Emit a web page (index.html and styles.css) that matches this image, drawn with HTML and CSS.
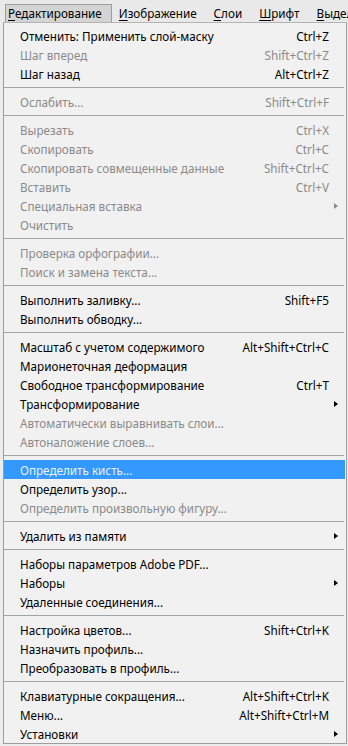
FILE: index.html
```html
<!DOCTYPE html>
<html lang="ru">
<head>
	<meta charset="utf-8" />
	<title>Редактирование</title>
	<link rel="stylesheet" href="styles.css">
</head>
<body>
	<div class="menubar">
		<div class="menubar-item open"><u>Р</u>едактирование</div>
		<div class="menubar-item"><u>И</u>зображение</div>
		<div class="menubar-item"><u>С</u>лои</div>
		<div class="menubar-item"><u>Ш</u>рифт</div>
		<div class="menubar-item"><u>В</u>ыделение</div>
	</div>

	<div class="dropdown">
		<div class="row"><span class="label">Отменить: Применить слой-маску</span><span class="key">Ctrl+Z</span><span class="sub"></span></div>
		<div class="row off"><span class="label">Шаг вперед</span><span class="key">Shift+Ctrl+Z</span><span class="sub"></span></div>
		<div class="row"><span class="label">Шаг назад</span><span class="key">Alt+Ctrl+Z</span><span class="sub"></span></div>
		<div class="sep"></div>
		<div class="row off"><span class="label">Ослабить...</span><span class="key">Shift+Ctrl+F</span><span class="sub"></span></div>
		<div class="sep"></div>
		<div class="row off"><span class="label">Вырезать</span><span class="key">Ctrl+X</span><span class="sub"></span></div>
		<div class="row off"><span class="label">Скопировать</span><span class="key">Ctrl+C</span><span class="sub"></span></div>
		<div class="row off"><span class="label">Скопировать совмещенные данные</span><span class="key">Shift+Ctrl+C</span><span class="sub"></span></div>
		<div class="row off"><span class="label">Вставить</span><span class="key">Ctrl+V</span><span class="sub"></span></div>
		<div class="row off"><span class="label">Специальная вставка</span><span class="key"></span><span class="sub"><i class="arrow"></i></span></div>
		<div class="row off"><span class="label">Очистить</span><span class="key"></span><span class="sub"></span></div>
		<div class="sep"></div>
		<div class="row off"><span class="label">Проверка орфографии...</span><span class="key"></span><span class="sub"></span></div>
		<div class="row off"><span class="label">Поиск и замена текста...</span><span class="key"></span><span class="sub"></span></div>
		<div class="sep"></div>
		<div class="row"><span class="label">Выполнить заливку...</span><span class="key">Shift+F5</span><span class="sub"></span></div>
		<div class="row"><span class="label">Выполнить обводку...</span><span class="key"></span><span class="sub"></span></div>
		<div class="sep"></div>
		<div class="row"><span class="label">Масштаб с учетом содержимого</span><span class="key">Alt+Shift+Ctrl+C</span><span class="sub"></span></div>
		<div class="row"><span class="label">Марионеточная деформация</span><span class="key"></span><span class="sub"></span></div>
		<div class="row"><span class="label">Свободное трансформирование</span><span class="key">Ctrl+T</span><span class="sub"></span></div>
		<div class="row"><span class="label">Трансформирование</span><span class="key"></span><span class="sub"><i class="arrow"></i></span></div>
		<div class="row off"><span class="label">Автоматически выравнивать слои...</span><span class="key"></span><span class="sub"></span></div>
		<div class="row off"><span class="label">Автоналожение слоев...</span><span class="key"></span><span class="sub"></span></div>
		<div class="sep"></div>
		<div class="row hover"><span class="label">Определить кисть...</span><span class="key"></span><span class="sub"></span></div>
		<div class="row"><span class="label">Определить узор...</span><span class="key"></span><span class="sub"></span></div>
		<div class="row off"><span class="label">Определить произвольную фигуру...</span><span class="key"></span><span class="sub"></span></div>
		<div class="sep"></div>
		<div class="row"><span class="label">Удалить из памяти</span><span class="key"></span><span class="sub"><i class="arrow"></i></span></div>
		<div class="sep"></div>
		<div class="row"><span class="label">Наборы параметров Adobe PDF...</span><span class="key"></span><span class="sub"></span></div>
		<div class="row"><span class="label">Наборы</span><span class="key"></span><span class="sub"><i class="arrow"></i></span></div>
		<div class="row"><span class="label">Удаленные соединения...</span><span class="key"></span><span class="sub"></span></div>
		<div class="sep"></div>
		<div class="row"><span class="label">Настройка цветов...</span><span class="key">Shift+Ctrl+K</span><span class="sub"></span></div>
		<div class="row"><span class="label">Назначить профиль...</span><span class="key"></span><span class="sub"></span></div>
		<div class="row"><span class="label">Преобразовать в профиль...</span><span class="key"></span><span class="sub"></span></div>
		<div class="sep"></div>
		<div class="row"><span class="label">Клавиатурные сокращения...</span><span class="key">Alt+Shift+Ctrl+K</span><span class="sub"></span></div>
		<div class="row"><span class="label">Меню...</span><span class="key">Alt+Shift+Ctrl+M</span><span class="sub"></span></div>
		<div class="row"><span class="label">Установки</span><span class="key"></span><span class="sub"><i class="arrow"></i></span></div>
	</div>
</body>
</html>
```

FILE: styles.css
```css
body {
	margin: 0;
	background-color: #ececec;
	font-family: 'Noto Sans', 'Open Sans', Arial, sans-serif;
	font-size: 11.7px;
	color: #000000;
	overflow: hidden;
}

u {
	text-decoration: underline;
	text-underline-offset: 2px;
}

/* Menu bar
 * ======== */

.menubar {
	display: flex;
	gap: 4px;
	width: 348px;
	height: 22px;
	padding-left: 5px;
	box-sizing: border-box;
	overflow: hidden;
	white-space: nowrap;
	background-color: #e9e9e9;
}

.menubar-item {
	flex: none;
	padding: 0 9px 0 2px;
	margin-top: 4px;
	line-height: 17px;
	border: 1px solid transparent;
	border-bottom: 0 none;
}

.menubar-item.open {
	background-color: #d4d4d4;
	border-color: #9d9d9d;
	border-radius: 1px 1px 0 0;
}

/* Dropdown
 * ======== */

.dropdown {
	margin-left: 3px;
	width: 344px;
	box-sizing: border-box;
	padding: 3px 0 0 0;
	background-color: #f1f1f1;
	border: 1px solid #9d9d9d;
	border-top-color: #b4b4b4;
	white-space: nowrap;
}

.row {
	display: flex;
	align-items: center;
	height: 19px;
	padding-left: 16px;
	color: #000000;
}

.row.off {
	color: #8a8a8a;
}

.row.hover {
	background-color: #3399ff;
	color: #eaf4ff;
	margin-right: 1px;
}

.label {
	flex: 1;
}

.key {
	text-align: right;
}

.sub {
	width: 17px;
	display: flex;
	align-items: center;
}

.arrow {
	display: block;
	margin-left: 5px;
	width: 0;
	height: 0;
	border-style: solid;
	border-width: 3.5px 0 3.5px 4px;
	border-color: transparent transparent transparent #000000;
}

.row.off .arrow {
	border-left-color: #8a8a8a;
}

.sep {
	height: 1px;
	margin: 4px 2px 4px 0;
	background-color: #a3a3a3;
}
```
